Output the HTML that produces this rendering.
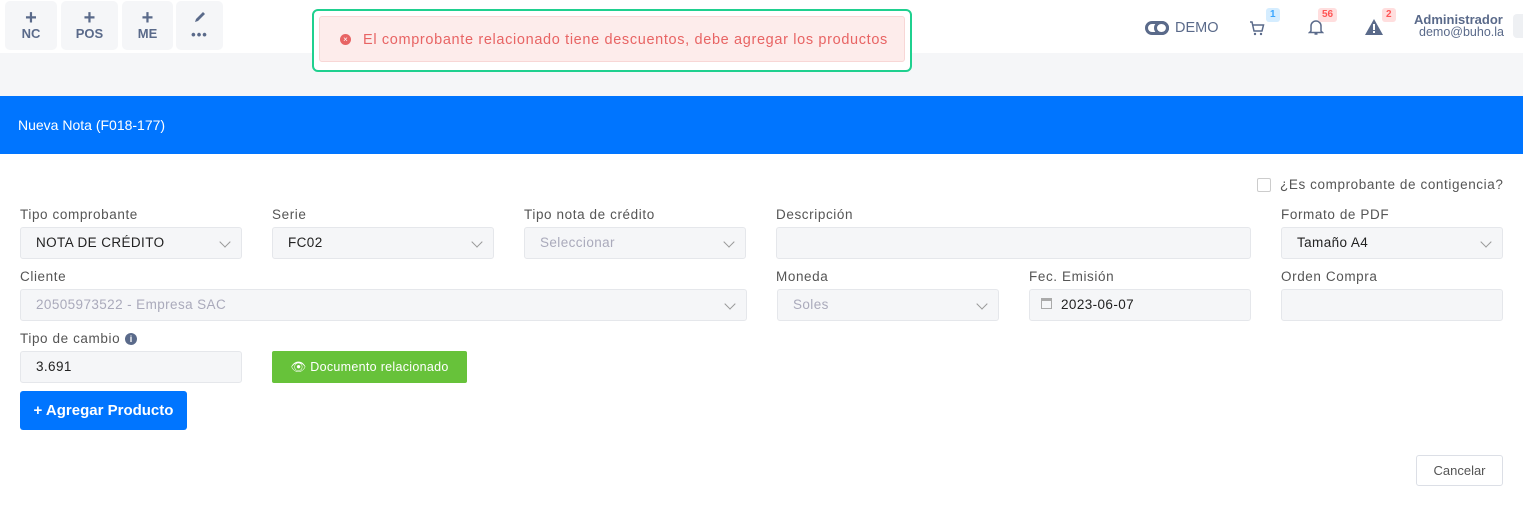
<!DOCTYPE html>
<html><head><meta charset="utf-8"><style>
*{box-sizing:border-box;margin:0;padding:0}
body{width:1523px;height:506px;overflow:hidden;background:#fff;font-family:"Liberation Sans",sans-serif;position:relative;color:#333}
.a{position:absolute}
.qb{position:absolute;top:1px;height:49px;background:#f5f6f8;border-radius:5px;color:#5a6a8a;font-weight:bold;font-size:13px;text-align:center;line-height:15px;padding-top:9px}
.qb b{display:block;font-size:20px;line-height:16px}
.lbl{position:absolute;font-size:13.5px;color:#555;letter-spacing:0.6px}
.in{position:absolute;height:32px;background:#f5f6f8;border:1px solid #e5e7eb;border-radius:3px;font-size:13.5px;color:#222;padding-left:15px;line-height:30px;letter-spacing:0.4px}
.in.dis{color:#aab}
.chev{position:absolute;right:12px;top:10px;width:8px;height:8px;border-right:1.5px solid #999;border-bottom:1.5px solid #999;transform:rotate(45deg)}
.badge{position:absolute;font-size:10px;font-weight:bold;border-radius:3px;padding:0 4px;line-height:14px}
</style></head><body>
<div class="qb" style="left:5px;width:52px"><b>+</b>NC</div>
<div class="qb" style="left:61px;width:57px"><b>+</b>POS</div>
<div class="qb" style="left:122px;width:51px"><b>+</b>ME</div>
<div class="qb" style="left:176px;width:47px"><svg width="14" height="14" viewBox="0 0 14 14"><path d="M2 12 L3 9 L10 2 L12 4 L5 11 Z" fill="#5a6a8a"/></svg><br><span style="letter-spacing:1px">•••</span></div>
<div class="a" style="left:0;top:53px;width:1523px;height:43px;background:#f5f6f8"></div>
<div class="a" style="left:312px;top:9px;width:600px;height:63px;border:2px solid #1fd08f;border-radius:6px;background:#fff"></div>
<div class="a" style="left:319px;top:16px;width:586px;height:46px;background:#fdeceb;border:1px solid #f8d7d6;border-radius:3px;color:#e86464;font-size:14.5px;line-height:46px;padding-left:43px;letter-spacing:0.65px">El comprobante relacionado tiene descuentos, debe agregar los productos</div>
<div class="a" style="left:340px;top:34px;width:11px;height:11px;border-radius:50%;background:#e86464;color:#fff;font-size:8px;line-height:11px;text-align:center">×</div>
<div class="a" style="left:1145px;top:21px;width:24px;height:14px;border:3px solid #5a6a8a;border-radius:8px"></div>
<div class="a" style="left:1154px;top:21px;width:15px;height:14px;border:3px solid #5a6a8a;border-radius:50%"></div>
<div class="a" style="left:1175px;top:20px;font-size:14.5px;color:#5a6a8a">DEMO</div>
<svg class="a" style="left:1249px;top:20px" width="16" height="16" viewBox="0 0 16 16"><path d="M1 2h2l2 9h8l1.5-6H4" fill="none" stroke="#5a6a8a" stroke-width="1.5"/><circle cx="6" cy="14" r="1.2" fill="#5a6a8a"/><circle cx="12" cy="14" r="1.2" fill="#5a6a8a"/></svg>
<div class="badge" style="left:1266px;top:8px;background:#d5edff;color:#3aa6ff">1</div>
<svg class="a" style="left:1308px;top:19px" width="16" height="17" viewBox="0 0 16 17"><path d="M3 12V7a5 5 0 0110 0v5l1.5 1.5h-13Z M6.5 15h3" fill="none" stroke="#5a6a8a" stroke-width="1.5"/></svg>
<div class="badge" style="left:1318px;top:8px;background:#ffdede;color:#f55">56</div>
<svg class="a" style="left:1364px;top:18px" width="20" height="18" viewBox="0 0 20 18"><path d="M10 1L19 17H1Z" fill="#5a6a8a"/><rect x="9" y="6" width="2" height="6" fill="#fff"/><rect x="9" y="13" width="2" height="2" fill="#fff"/></svg>
<div class="badge" style="left:1382px;top:8px;background:#ffdede;color:#f55">2</div>
<div class="a" style="left:1414px;top:12px;font-size:13px;font-weight:bold;color:#5a6a8a">Administrador</div>
<div class="a" style="left:1419px;top:25px;font-size:12.5px;color:#5a6a8a">demo@buho.la</div>
<div class="a" style="left:1513px;top:14px;width:14px;height:24px;background:#eef0f3;border-radius:4px"></div>
<div class="a" style="left:0;top:96px;width:1523px;height:58px;background:#0075ff;color:#fff;font-size:14px;line-height:58px;padding-left:18px">Nueva Nota (F018-177)</div>
<div class="a" style="left:1257px;top:178px;width:14px;height:14px;border:1px solid #ccc;border-radius:2px"></div>
<div class="lbl" style="left:1280px;top:177px">¿Es comprobante de contigencia?</div>
<div class="lbl" style="left:20px;top:207px">Tipo comprobante</div>
<div class="lbl" style="left:272px;top:207px">Serie</div>
<div class="lbl" style="left:524px;top:207px">Tipo nota de crédito</div>
<div class="lbl" style="left:776px;top:207px">Descripción</div>
<div class="lbl" style="left:1281px;top:207px">Formato de PDF</div>
<div class="in" style="left:20px;top:227px;width:222px">NOTA DE CRÉDITO<i class="chev"></i></div>
<div class="in" style="left:272px;top:227px;width:222px">FC02<i class="chev"></i></div>
<div class="in dis" style="left:524px;top:227px;width:222px">Seleccionar<i class="chev"></i></div>
<div class="in" style="left:776px;top:227px;width:475px"></div>
<div class="in" style="left:1281px;top:227px;width:222px">Tamaño A4<i class="chev"></i></div>
<div class="lbl" style="left:20px;top:269px">Cliente</div>
<div class="lbl" style="left:776px;top:269px">Moneda</div>
<div class="lbl" style="left:1029px;top:269px">Fec. Emisión</div>
<div class="lbl" style="left:1281px;top:269px">Orden Compra</div>
<div class="in dis" style="left:20px;top:289px;width:727px">20505973522 - Empresa SAC<i class="chev"></i></div>
<div class="in dis" style="left:777px;top:289px;width:222px">Soles<i class="chev"></i></div>
<div class="in" style="left:1029px;top:289px;width:222px;padding-left:31px">2023-06-07</div>
<div class="a" style="left:1041px;top:298px;width:11px;height:11px;border:1px solid #aaa;border-top-width:3px"></div>
<div class="in" style="left:1281px;top:289px;width:222px"></div>
<div class="lbl" style="left:20px;top:331px">Tipo de cambio</div>
<div class="a" style="left:125px;top:333px;width:12px;height:12px;border-radius:50%;background:#5a6a8a;color:#fff;font-size:9px;font-weight:bold;text-align:center;line-height:12px">i</div>
<div class="in" style="left:20px;top:351px;width:222px">3.691</div>
<div class="a" style="left:272px;top:351px;width:195px;height:32px;background:#67c23a;border-radius:2px;color:#fff;font-size:12.5px;line-height:32px;text-align:center;letter-spacing:0.3px">👁 Documento relacionado</div>
<div class="a" style="left:20px;top:391px;width:167px;height:39px;background:#0075ff;border-radius:3px;color:#fff;font-size:15px;line-height:39px;text-align:center;font-weight:bold">+ Agregar Producto</div>
<div class="a" style="left:1416px;top:455px;width:87px;height:31px;border:1px solid #dcdfe6;border-radius:3px;font-size:13px;line-height:29px;text-align:center;color:#555">Cancelar</div>
</body></html>
